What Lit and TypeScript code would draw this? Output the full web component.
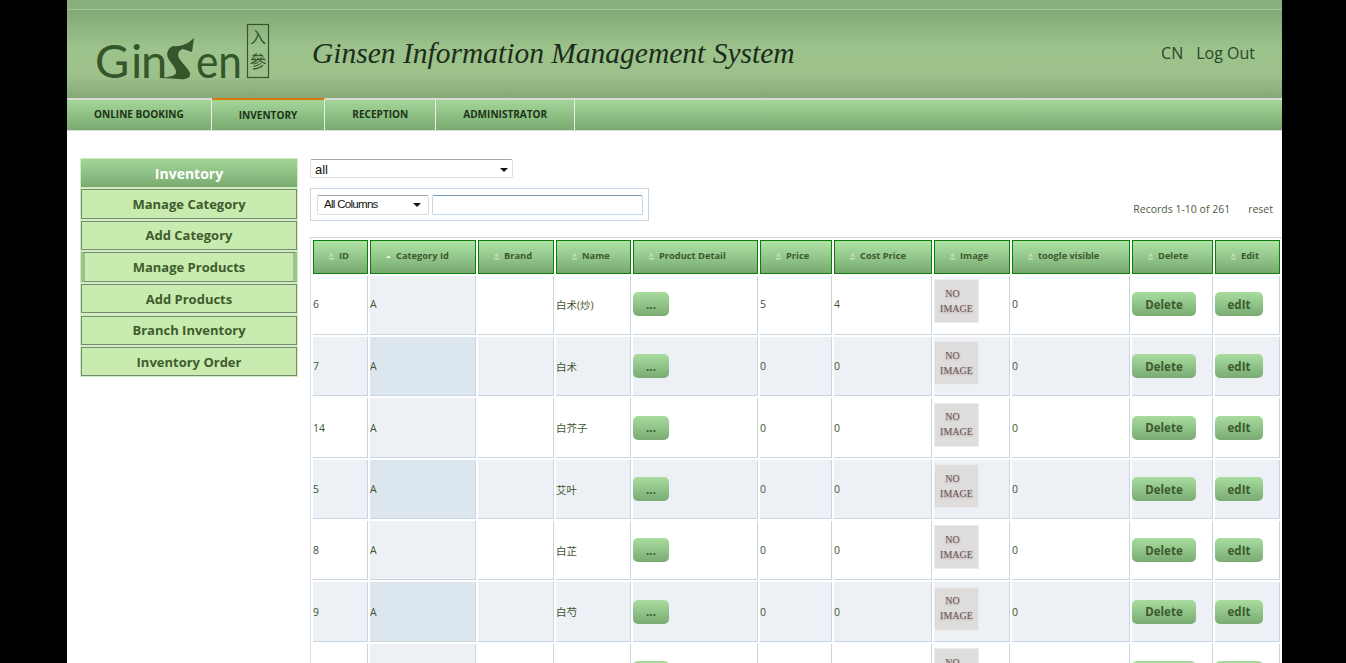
import { LitElement, html, css } from "lit";
import { customElement } from "lit/decorators.js";

const NAV = ["ONLINE BOOKING", "INVENTORY", "RECEPTION", "ADMINISTRATOR"];
const SIDE = ["Manage Category", "Add Category", "Manage Products", "Add Products", "Branch Inventory", "Inventory Order"];
const COLS = [
  { label: "ID", w: 55 },
  { label: "Category Id", w: 106 },
  { label: "Brand", w: 76 },
  { label: "Name", w: 75 },
  { label: "Product Detail", w: 125 },
  { label: "Price", w: 72 },
  { label: "Cost Price", w: 98 },
  { label: "Image", w: 76 },
  { label: "toogle visible", w: 118 },
  { label: "Delete", w: 81 },
  { label: "Edit", w: 65 },
];
// last row is cut by the window, only its image and button tops show
const ROWS = [
  { id: "6", cat: "A", name: "白术(炒)", price: "5", cost: "4", vis: "0" },
  { id: "7", cat: "A", name: "白术", price: "0", cost: "0", vis: "0" },
  { id: "14", cat: "A", name: "白芥子", price: "0", cost: "0", vis: "0" },
  { id: "5", cat: "A", name: "艾叶", price: "0", cost: "0", vis: "0" },
  { id: "8", cat: "A", name: "白芷", price: "0", cost: "0", vis: "0" },
  { id: "9", cat: "A", name: "白芍", price: "0", cost: "0", vis: "0" },
  { id: "", cat: "", name: "", price: "", cost: "", vis: "" },
];

@customElement("app-root")
export class AppRoot extends LitElement {
  static styles = css`
    :host {
      display: block;
      height: 663px;
      overflow: hidden;
      background: #000;
      font-family: "Open Sans", "Noto Sans CJK SC", sans-serif;
    }
    .page {
      width: 1215px;
      height: 663px;
      margin-left: 67px;
      background: #fff;
      overflow: hidden;
    }
    .header {
      height: 98px;
      box-sizing: border-box;
      display: flex;
      align-items: center;
      border-top: 9px solid #88ae7c;
      box-shadow: inset 0 1px 0 #a6c79b;
      background: linear-gradient(#82a976, #9cc38b 45%, #9cc18a 75%, #87a878);
    }
    .logo {
      width: 190px;
      height: 75px;
      margin: -1px 0 0 23px;
      flex: none;
    }
    .title {
      margin: -1px 0 0 32px;
      font: italic 29.5px "Liberation Serif", serif;
      color: #1c2c1c;
      flex: 1;
    }
    .links {
      display: flex;
      gap: 13px;
      margin: -1px 27px 0 0;
      font-size: 16px;
      color: #2a4628;
    }
    .nav {
      height: 33px;
      box-sizing: border-box;
      display: flex;
      border-top: 2px solid #d8dcd6;
      border-bottom: 1px solid #dcdcdc;
      background: linear-gradient(#a4d598, #79ab71);
    }
    .nav-item {
      display: flex;
      align-items: center;
      padding: 0 27px 2px;
      border-right: 1px solid #e4f0e0;
      font-size: 10.05px;
      font-weight: 700;
      color: #1d3318;
    }
    .nav-item.active {
      margin-top: -2px;
      padding-top: 2px;
      border-top: 2px solid #e0770e;
    }
    .body {
      display: flex;
      align-items: flex-start;
      gap: 12px;
      padding: 27px 0 0 13px;
    }
    .side {
      width: 218px;
      flex: none;
      box-sizing: border-box;
      padding: 1px;
      background: #d2edc0;
      display: flex;
      flex-direction: column;
      gap: 2.2px;
    }
    .side-title {
      height: 28px;
      display: flex;
      align-items: center;
      justify-content: center;
      background: linear-gradient(#a4d598, #79ab71);
      color: #fff;
      font-size: 14px;
      font-weight: 700;
    }
    .side-item {
      height: 29.4px;
      box-sizing: border-box;
      display: flex;
      align-items: center;
      justify-content: center;
      border: 1px solid #77896f;
      background: #c8ebb0;
      color: #3e5c2c;
      font-size: 13px;
      font-weight: 700;
    }
    .side-item.active {
      border-left: 4px solid #9cc48a;
      border-right: 4px solid #9cc48a;
    }
    .main {
      flex: 1;
      min-width: 0;
      margin-top: 1px;
      display: flex;
      flex-direction: column;
    }
    .select {
      box-sizing: border-box;
      display: flex;
      align-items: center;
      justify-content: space-between;
      background: #fff;
      border: 1px solid #dcdcdc;
      border-top-color: #a8a8a8;
      border-radius: 2px;
      font-family: "Liberation Sans", sans-serif;
      font-size: 12px;
      color: #111;
    }
    .select::after {
      content: "";
      border: 4px solid transparent;
      border-top: 4px solid #111;
      border-bottom: 0;
    }
    .select-all {
      width: 203px;
      height: 19px;
      padding: 2px 4px 0;
      font-size: 13px;
    }
    .toolbar {
      display: flex;
      justify-content: space-between;
      align-items: flex-end;
      margin-top: 10px;
      padding-right: 9px;
    }
    .filter {
      width: 339px;
      height: 33px;
      box-sizing: border-box;
      display: flex;
      align-items: center;
      gap: 3px;
      padding: 0 5px 0 6px;
      border: 1px solid #c6d6e4;
    }
    .select-col {
      width: 112px;
      height: 20px;
      padding: 0 7px 2px 6px;
      font-size: 11.5px;
      letter-spacing: -0.7px;
    }
    .select-col::after {
      margin-top: 2px;
    }
    .search {
      flex: 1;
      height: 20px;
      box-sizing: border-box;
      border: 1px solid #c4d8e8;
      border-top-color: #6e9cc0;
      border-radius: 2px;
    }
    .records {
      display: flex;
      gap: 18px;
      padding-bottom: 5px;
      font-size: 10.5px;
      color: #4c5c40;
    }
    table {
      margin-top: 16px;
      width: 972px;
      table-layout: fixed;
      border-collapse: separate;
      border-spacing: 2px;
      border-top: 1px solid #d0d8e0;
      border-left: 1px solid #d0dce6;
    }
    th {
      height: 34px;
      padding: 0 0 4px 15px;
      box-sizing: border-box;
      border: 1px solid #0a7d0a;
      background: linear-gradient(#b0e4a6, #77a96f);
      color: #3c5a2e;
      font-size: 9.3px;
      font-weight: 700;
      text-align: left;
      white-space: nowrap;
    }
    .sort {
      vertical-align: -1px;
      margin-right: 5px;
      fill: #c4dcc0;
    }
    .sort.on {
      fill: #f4f8f2;
    }
    td {
      height: 59px;
      padding: 0;
      box-sizing: border-box;
      border-right: 1px solid #c8d6e2;
      border-bottom: 1px solid #c8d6e2;
      background: #fff;
      color: #3f5530;
      font-size: 10.5px;
      white-space: nowrap;
    }
    tr:first-child td {
      padding-bottom: 2px;
    }
    tr:nth-child(3n) td {
      height: 60px;
    }
    tr:nth-child(even) td {
      background: #edf1f6;
    }
    td.sorted {
      background: #edf1f6;
    }
    tr:nth-child(even) td.sorted {
      background: #dce6ef;
    }
    .btn {
      display: flex;
      align-items: center;
      justify-content: center;
      height: 24px;
      border-radius: 5px;
      background: linear-gradient(#a9dd9f, #79ab72);
      color: #3c5a2e;
      font-size: 11.5px;
      font-weight: 700;
    }
    .noimg {
      width: 45px;
      height: 44px;
      margin-bottom: 6px;
      box-sizing: border-box;
      border: 1px solid #ececec;
      background: #dfdcdc;
      display: flex;
      flex-direction: column;
      align-items: center;
      justify-content: center;
      gap: 3px;
      font: 10px/12px "Liberation Serif", serif;
      color: #6a5555;
      text-shadow: 0 1px 2px #b0a0a0;
    }
    .noimg span:first-child {
      margin-right: 8px;
    }
  `;

  private logo() {
    return html`<svg class="logo" viewBox="0 0 190 75">
      <text x="5 41 51" y="62" font-family="Lato" font-size="47" fill="#35552a">Gin</text>
      <path d="M104 22 L102 36 L93 33 C89 34 87 38 89 42 C92 47 98 52 100 57 C101 62 96 64 89 63 L71 62 C78 61 85 60 86 57 C87 53 81 47 78 42 C76 37 78 32 83 30 C90 31 98 28 104 22 Z" fill="#35552a"/>
      <text x="106" y="62" font-family="Lato" font-size="47" fill="#35552a" textLength="46" lengthAdjust="spacingAndGlyphs">en</text>
      <rect x="157.5" y="8.5" width="21" height="53" fill="none" stroke="#35552a" stroke-width="1.2"/>
      <text x="168" y="27" text-anchor="middle" font-family="Noto Sans CJK SC" font-size="16" fill="#35552a">入</text>
      <text x="168" y="52" text-anchor="middle" font-family="Noto Sans CJK TC" font-size="17" fill="#35552a">參</text>
    </svg>`;
  }

  render() {
    return html`<div class="page">
      <div class="header">
        ${this.logo()}
        <div class="title">Ginsen Information Management System</div>
        <div class="links"><span>CN</span><span>Log Out</span></div>
      </div>
      <div class="nav">
        ${NAV.map((n) => html`<div class="nav-item ${n === "INVENTORY" ? "active" : ""}">${n}</div>`)}
      </div>
      <div class="body">
        <div class="side">
          <div class="side-title">Inventory</div>
          ${SIDE.map((s) => html`<div class="side-item ${s === "Manage Products" ? "active" : ""}">${s}</div>`)}
        </div>
        <div class="main">
          <div class="select select-all">all</div>
          <div class="toolbar">
            <div class="filter">
              <div class="select select-col">All Columns</div>
              <div class="search"></div>
            </div>
            <div class="records"><span>Records 1-10 of 261</span><span>reset</span></div>
          </div>
          <table>
            <colgroup>${COLS.map((c) => html`<col style="width:${c.w}px" />`)}</colgroup>
            <thead>
              <tr>
                ${COLS.map(
                  (c, i) => html`<th>
                    ${i === 1
                      ? html`<svg class="sort on" width="5" height="7"><path d="M2.5 2.5 L5 5 H0 Z" /></svg>`
                      : html`<svg class="sort" width="5" height="7"><path d="M2.5 0 L5 3.5 H0 Z" /><rect y="5" width="5" height="1.5" /></svg>`}${c.label}
                  </th>`
                )}
              </tr>
            </thead>
            <tbody>
              ${ROWS.map(
                (r) => html`<tr>
                  <td>${r.id}</td>
                  <td class="sorted">${r.cat}</td>
                  <td></td>
                  <td>${r.name}</td>
                  <td><div class="btn" style="width:36px">${r.id ? "..." : ""}</div></td>
                  <td>${r.price}</td>
                  <td>${r.cost}</td>
                  <td><div class="noimg"><span>NO</span><span>IMAGE</span></div></td>
                  <td>${r.vis}</td>
                  <td><div class="btn" style="width:64px">${r.id ? "Delete" : ""}</div></td>
                  <td><div class="btn" style="width:48px">${r.id ? "edIt" : ""}</div></td>
                </tr>`
              )}
            </tbody>
          </table>
        </div>
      </div>
    </div>`;
  }
}
